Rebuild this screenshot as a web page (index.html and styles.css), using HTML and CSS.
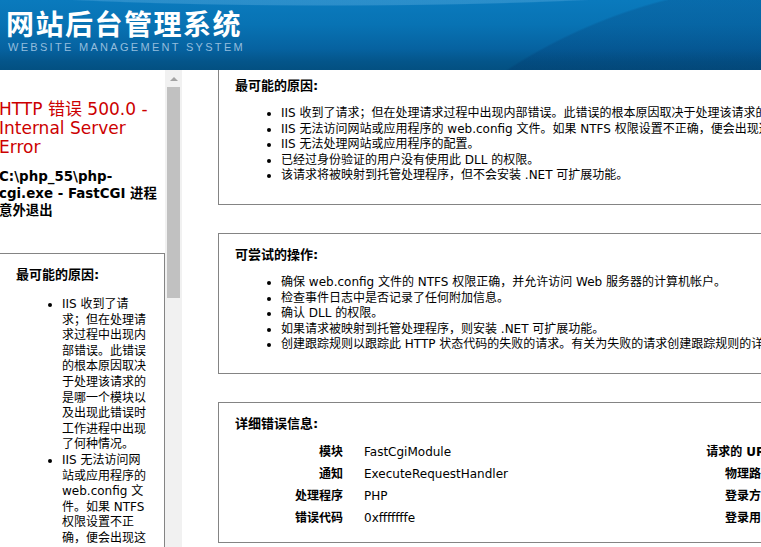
FILE: index.html
```html
<!DOCTYPE html>
<html lang="zh-CN">
<head>
<meta charset="utf-8">
<title>网站后台管理系统</title>
<link rel="stylesheet" href="styles.css">
</head>
<body>
<header class="banner">
  <div class="brand">
    <div class="brand-cn">网站后台管理系统</div>
    <div class="brand-en">WEBSITE MANAGEMENT SYSTEM</div>
  </div>
</header>
<div class="frames">
  <aside class="side-frame">
    <div class="side-view">
      <div class="side-content">
        <h3 class="err-title">HTTP 错误 500.0 - Internal Server Error</h3>
        <h4 class="err-sub">C:\php_55\php-cgi.exe - FastCGI 进程意外退出</h4>
        <section class="box box--side">
          <h2 class="box-title">最可能的原因:</h2>
          <ul class="box-list">
            <li>IIS 收到了请求；但在处理请求过程中出现内部错误。此错误的根本原因取决于处理该请求的是哪一个模块以及出现此错误时工作进程中出现了何种情况。</li>
            <li>IIS 无法访问网站或应用程序的 web.config 文件。如果 NTFS 权限设置不正确，便会出现这种情况。</li>
            <li>IIS 无法处理网站或应用程序的配置。</li>
          </ul>
        </section>
      </div>
    </div>
    <div class="scrollbar">
      <span class="scroll-arrow"></span>
      <span class="scroll-thumb"></span>
    </div>
  </aside>
  <main class="main-frame">
    <div class="main-content">
      <section class="box">
        <h2 class="box-title">最可能的原因:</h2>
        <ul class="box-list">
          <li>IIS 收到了请求；但在处理请求过程中出现内部错误。此错误的根本原因取决于处理该请求的是哪一个模块以及出现此错误时工作进程中出现了何种情况。</li>
          <li>IIS 无法访问网站或应用程序的 web.config 文件。如果 NTFS 权限设置不正确，便会出现这种情况。</li>
          <li>IIS 无法处理网站或应用程序的配置。</li>
          <li>已经过身份验证的用户没有使用此 DLL 的权限。</li>
          <li>该请求将被映射到托管处理程序，但不会安装 .NET 可扩展功能。</li>
        </ul>
      </section>
      <section class="box">
        <h2 class="box-title">可尝试的操作:</h2>
        <ul class="box-list">
          <li>确保 web.config 文件的 NTFS 权限正确，并允许访问 Web 服务器的计算机帐户。</li>
          <li>检查事件日志中是否记录了任何附加信息。</li>
          <li>确认 DLL 的权限。</li>
          <li>如果请求被映射到托管处理程序，则安装 .NET 可扩展功能。</li>
          <li>创建跟踪规则以跟踪此 HTTP 状态代码的失败的请求。有关为失败的请求创建跟踪规则的详细信息，请单击此处。</li>
        </ul>
      </section>
      <section class="box box--details">
        <h2 class="box-title">详细错误信息:</h2>
        <div class="details">
          <table class="details-left">
            <tr><th>模块</th><td>FastCgiModule</td></tr>
            <tr><th>通知</th><td>ExecuteRequestHandler</td></tr>
            <tr><th>处理程序</th><td>PHP</td></tr>
            <tr><th>错误代码</th><td>0xfffffffe</td></tr>
          </table>
          <table class="details-right">
            <tr><th>请求的 URL</th><td>http://localhost:80/index.php</td></tr>
            <tr><th>物理路径</th><td>C:\inetpub\wwwroot\index.php</td></tr>
            <tr><th>登录方法</th><td>匿名</td></tr>
            <tr><th>登录用户</th><td>匿名</td></tr>
          </table>
        </div>
      </section>
    </div>
  </main>
</div>
</body>
</html>
```
FILE: styles.css
```css
html, body {
  margin: 0;
  padding: 0;
}

body {
  width: 761px;
  height: 547px;
  overflow: hidden;
  background: #ffffff;
  font-family: "DejaVu Sans", "Noto Sans CJK SC", sans-serif;
  font-size: 12px;
  color: #000;
}

/* ---------- banner ---------- */
.banner {
  height: 70px;
  overflow: hidden;
  background:
    radial-gradient(ellipse 420px 26px at 330px -20px, rgba(120, 190, 235, 0.3) 96%, rgba(120, 190, 235, 0) 100%),
    radial-gradient(circle 538px at 800px 520px, rgba(0, 30, 80, 0.16) 99.6%, rgba(0, 30, 80, 0) 100%),
    linear-gradient(180deg, #0a7abd 0%, #0873b4 35%, #0662a0 70%, #04558a 88%, #035081 100%);
}

.brand {
  padding: 8px 0 0 6px;
}

.brand-cn {
  font-family: "Noto Sans CJK SC", sans-serif;
  font-size: 28px;
  line-height: 30px;
  font-weight: 700;
  letter-spacing: 1.5px;
  color: #ffffff;
}

.brand-en {
  margin-top: 3px;
  padding-left: 2px;
  font-family: "Liberation Sans", Arial, sans-serif;
  font-size: 11px;
  line-height: 13px;
  letter-spacing: 2.3px;
  color: #93bddd;
}

/* ---------- frames ---------- */
.frames {
  display: flex;
  height: 477px;
}

.side-frame {
  display: flex;
  width: 182px;
  flex: none;
}

.side-view {
  width: 165px;
  overflow: hidden;
}

.side-content {
  width: 166px;
  margin-left: -1px;
  padding-top: 30px;
}

.err-title {
  margin: 0;
  font-size: 17px;
  line-height: 19px;
  font-weight: normal;
  color: #cc0000;
}

.err-sub {
  margin: 11px 0 0;
  font-size: 13.4px;
  line-height: 17px;
  font-weight: bold;
  color: #000;
}

.scrollbar {
  width: 17px;
  flex: none;
  background: #f1f1f1;
  display: flex;
  flex-direction: column;
  align-items: center;
}

.scroll-arrow {
  margin-top: 7px;
  width: 0;
  height: 0;
  border-left: 4px solid transparent;
  border-right: 4px solid transparent;
  border-bottom: 4px solid #a3a3a3;
}

.scroll-thumb {
  margin-top: 6px;
  width: 13px;
  height: 211px;
  background: #c1c1c1;
}

.main-frame {
  flex: 1;
  overflow: hidden;
  padding-left: 36px;
}

.main-content {
  width: 1300px;
  margin-top: -6px;
}

/* ---------- boxes ---------- */
.box {
  border: 1px solid #848484;
  padding: 13px 15px 20px 16px;
  margin-bottom: 28px;
}

.box--side {
  margin-top: 34px;
  margin-bottom: 0;
  padding-right: 15px;
}

.box--side .box-list {
  margin-top: 14px;
}

.box--details {
  padding-bottom: 13px;
}

.box-title {
  margin: 0;
  font-size: 13px;
  line-height: 16px;
  font-weight: bold;
  color: #000;
}

.box-list {
  margin: 12px 0 0;
  padding-left: 46px;
}

.box-list li {
  line-height: 15.6px;
}

.main-frame .box-list li {
  white-space: nowrap;
}

/* ---------- details ---------- */
.details {
  display: flex;
  margin-top: 9px;
}

.details table {
  border-collapse: collapse;
}

.details th,
.details td {
  padding: 3px 0;
  line-height: 16px;
  vertical-align: top;
  white-space: nowrap;
}

.details th {
  text-align: right;
  font-weight: bold;
}

.details td {
  text-align: left;
  font-weight: normal;
  padding-left: 21px;
}

.details-left {
  width: 425px;
  flex: none;
}

.details-left th {
  width: 108px;
}

.details-right th {
  width: 113px;
}
```
